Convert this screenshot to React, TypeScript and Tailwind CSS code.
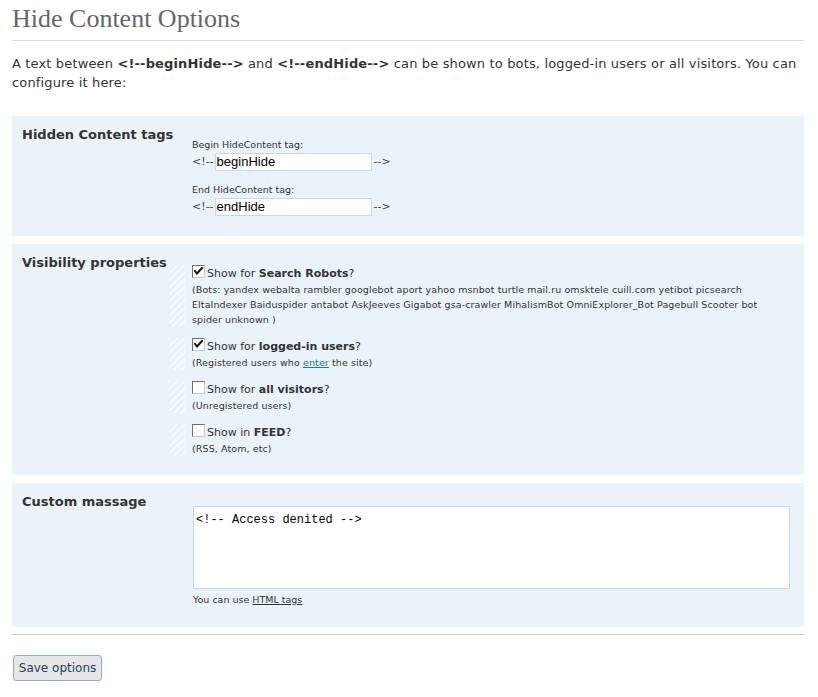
import React from "react";

const sans = "font-['DejaVu_Sans',Verdana,sans-serif]";

function Check({ checked }: { checked?: boolean }) {
  return (
    <span className="relative inline-block h-[13px] w-[13px] shrink-0 border border-t-[#6f6f6f] border-l-[#6f6f6f] border-r-[#c8c8c8] border-b-[#c8c8c8] bg-white">
      {checked && (
        <svg viewBox="0 0 11 11" className="absolute left-0 top-0 h-[11px] w-[11px]">
          <path d="M2 5 L4 7.5 L9 2" fill="none" stroke="#111" strokeWidth="2" strokeLinecap="square" />
        </svg>
      )}
    </span>
  );
}

function Stripes() {
  return (
    <div className="w-[16px] shrink-0 bg-[repeating-linear-gradient(135deg,#f7fafd_0px,#f7fafd_2px,transparent_2px,transparent_5px)]" />
  );
}

function Option({
  checked,
  pre,
  strong,
  children,
}: {
  checked?: boolean;
  pre: string;
  strong: string;
  children: React.ReactNode;
}) {
  return (
    <div className="flex gap-[7px]">
      <Stripes />
      <div className="flex-1">
        <div className="flex h-[17px] items-start gap-[2px]">
          <Check checked={checked} />
          <span className="text-[11px] leading-[17px] text-[#333]">
            {pre}
            <b className="font-bold">{strong}</b>?
          </span>
        </div>
        <div className="text-[9.5px] leading-[15px] tracking-[0.1px] text-[#333]">{children}</div>
      </div>
    </div>
  );
}

function Section({ title, children, className }: { title: string; children: React.ReactNode; className?: string }) {
  return (
    <div className={"flex bg-[#eaf2fa] " + (className ?? "")}>
      <div className="w-[157px] shrink-0 whitespace-nowrap pl-[10px] pt-[10px] text-[13px] font-bold leading-[18px] text-[#333]">
        {title}
      </div>
      <div className="flex-1">{children}</div>
    </div>
  );
}

function TagInput({ label, value }: { label: string; value: string }) {
  return (
    <div>
      <div className="h-[14px] text-[9.5px] leading-[14px] text-[#333]">{label}</div>
      <div className="mt-px flex h-[18px] items-center text-[11px] text-[#444]">
        <span>&lt;!--</span>
        <div className="ml-px flex h-[18px] w-[157px] items-center border border-[#c6d9e9] bg-white pl-px font-['Liberation_Sans',Arial,sans-serif] text-[13px] text-black">
          {value}
        </div>
        <span className="ml-[2px]">--&gt;</span>
      </div>
    </div>
  );
}

export default function App() {
  return (
    <div className={`${sans} bg-white px-[12px] pb-[16px] w-[818px] min-h-[697px] pr-[14px]`}>
      <h2 className="border-b border-[#dadada] pt-[3px] pb-[6px] font-['Liberation_Serif',Georgia,serif] text-[26px] leading-[31px] text-[#666]">
        Hide Content Options
      </h2>
      <p className="mt-[13px] text-[13px] leading-[19px] tracking-[0.15px] text-[#333]">
        A text between <b>&lt;!--beginHide--&gt;</b> and <b>&lt;!--endHide--&gt;</b> can be shown to bots, logged-in users
        or all visitors. You can configure it here:
      </p>

      <div className="mt-[24px] flex flex-col gap-[8px]">
        <Section title="Hidden Content tags" className="h-[120px]">
          <div className="flex flex-col gap-[12px] pl-[23px] pt-[22px]">
            <TagInput label="Begin HideContent tag:" value="beginHide" />
            <TagInput label="End HideContent tag:" value="endHide" />
          </div>
        </Section>

        <Section title="Visibility properties" className="h-[231px]">
          <div className="flex flex-col gap-[11px] pt-[21px] pr-[44px]">
            <Option checked pre="Show for " strong="Search Robots">
              (Bots: yandex webalta rambler googlebot aport yahoo msnbot turtle mail.ru omsktele cuill.com yetibot
              picsearch EltaIndexer Baiduspider antabot AskJeeves Gigabot gsa-crawler MihalismBot OmniExplorer_Bot
              Pagebull Scooter bot spider unknown )
            </Option>
            <Option checked pre="Show for " strong="logged-in users">
              (Registered users who{" "}
              <a href="#" className="text-[#21759b] underline">
                enter
              </a>{" "}
              the site)
            </Option>
            <Option pre="Show for " strong="all visitors">
              (Unregistered users)
            </Option>
            <Option pre="Show in " strong="FEED">
              (RSS, Atom, etc)
            </Option>
          </div>
        </Section>

        <Section title="Custom massage" className="h-[144px]">
          <div className="pl-[24px] pr-[14px] pt-[23px]">
            <textarea
              className="block h-[83px] w-full resize-none border border-[#c6d9e9] bg-white px-[2px] pt-[6px] pb-[4px] font-['Liberation_Mono','Courier_New',monospace] text-[12px] leading-[15px] text-black outline-none"
              defaultValue="<!-- Access denited -->"
            />
            <div className="mt-[4px] text-[9.5px] leading-[14px] text-[#333]">
              You can use <span className="underline">HTML tags</span>
            </div>
          </div>
        </Section>
      </div>

      <div className="mt-[7px] border-t border-[#ccc]" />
      <button className="mt-[20px] ml-px h-[26px] w-[89px] rounded-[3px] border border-[#80b2d2] bg-[#e6e6e6] text-[12px] text-[#21415e]">
        Save options
      </button>
    </div>
  );
}
